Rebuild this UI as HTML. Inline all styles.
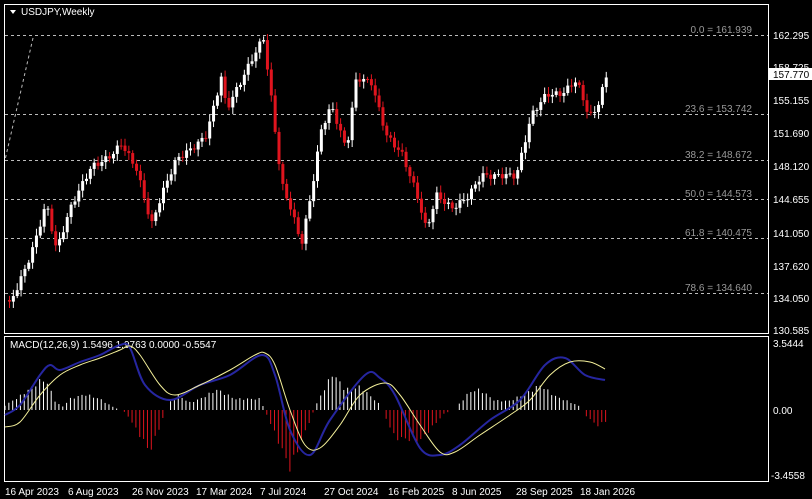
<!DOCTYPE html>
<html><head><meta charset="utf-8"><style>
html,body{margin:0;padding:0;background:#000;width:812px;height:499px;overflow:hidden}
svg{display:block}
text{font-family:"Liberation Sans",sans-serif;font-size:10px}
</style></head><body>
<svg id="s" width="812" height="499" xmlns="http://www.w3.org/2000/svg">
<rect width="812" height="499" fill="#000"/>
<rect x="4.5" y="4.5" width="764" height="329" fill="none" stroke="#fff"/>
<rect x="4.5" y="336.5" width="764" height="145" fill="none" stroke="#fff"/>
<g id="fib" stroke="#bbb" stroke-dasharray="3,3" stroke-width="1">
<line x1="5" y1="35.5" x2="768" y2="35.5"/><line x1="5" y1="114.5" x2="768" y2="114.5"/>
<line x1="5" y1="160.5" x2="768" y2="160.5"/><line x1="5" y1="199.5" x2="768" y2="199.5"/>
<line x1="5" y1="238.5" x2="768" y2="238.5"/><line x1="5" y1="293.5" x2="768" y2="293.5"/>
<line x1="33" y1="38" x2="5" y2="160"/>
</g>
<g fill="#999" text-anchor="end">
<text x="752" y="33">0.0 = 161.939</text><text x="752" y="112">23.6 = 153.742</text>
<text x="752" y="158">38.2 = 148.672</text><text x="752" y="197">50.0 = 144.573</text>
<text x="752" y="236">61.8 = 140.475</text><text x="752" y="291">78.6 = 134.640</text>
</g>
<path d="M10 10 L16 10 L13 14 Z" fill="#fff"/>
<text x="21" y="15" fill="#fff">USDJPY,Weekly</text>
<text x="10" y="348" fill="#fff" font-size="9.5">MACD(12,26,9) 1.5496 1.9763 0.0000 -0.5547</text>
<g id="c"></g><g id="h"></g><g id="l"></g>
<g fill="#fff">
<text x="773" y="39">162.295</text><text x="773" y="71">158.725</text>
<text x="773" y="104">155.155</text><text x="773" y="137">151.690</text>
<text x="773" y="170">148.120</text><text x="773" y="203">144.655</text>
<text x="773" y="237">141.050</text><text x="773" y="270">137.620</text>
<text x="773" y="302">134.050</text><text x="773" y="334">130.585</text>
<text x="773" y="347">3.5444</text><text x="773" y="414">0.00</text><text x="771" y="479">-3.4558</text>
</g>
<rect x="769" y="68" width="43" height="12" fill="#fff"/>
<text x="773" y="78" fill="#000">157.770</text>
<g fill="#fff">
<text x="5" y="495">16 Apr 2023</text><text x="68" y="495">6 Aug 2023</text>
<text x="132" y="495">26 Nov 2023</text><text x="196" y="495">17 Mar 2024</text>
<text x="260" y="495">7 Jul 2024</text><text x="324" y="495">27 Oct 2024</text>
<text x="388" y="495">16 Feb 2025</text><text x="452" y="495">8 Jun 2025</text>
<text x="516" y="495">28 Sep 2025</text><text x="580" y="495">18 Jan 2026</text>
</g>
</svg>
<script>
var NS="http://www.w3.org/2000/svg";
function el(p,t,a){var e=document.createElementNS(NS,t);for(var k in a)e.setAttribute(k,a[k]);p.appendChild(e);return e;}
function interp(pts,x){for(var i=0;i<pts.length-1;i++){if(x>=pts[i][0]&&x<=pts[i+1][0]){var t=(x-pts[i][0])/(pts[i+1][0]-pts[i][0]);return pts[i][1]+t*(pts[i+1][1]-pts[i][1]);}}return pts[x<pts[0][0]?0:pts.length-1][1];}
function smooth(p){var d="M"+p[0][0]+","+p[0][1];for(var i=0;i<p.length-1;i++){var p0=p[i-1]||p[i],p1=p[i],p2=p[i+1],p3=p[i+2]||p2;
d+=" C"+(p1[0]+(p2[0]-p0[0])/6)+","+(p1[1]+(p2[1]-p0[1])/6)+" "+(p2[0]-(p3[0]-p1[0])/6)+","+(p2[1]-(p3[1]-p1[1])/6)+" "+p2[0]+","+p2[1];}return d;}
var cp=[[8,300],[30,250],[45,205],[55,255],[70,210],[90,165],[110,150],[120,140],[135,170],[150,230],[160,200],[175,160],[190,145],[205,130],[220,75],[225,110],[240,85],[255,55],[262,40],[270,100],[280,180],[290,205],[300,240],[310,190],[320,130],[330,110],[345,155],[355,80],[370,80],[385,130],[400,150],[415,195],[425,235],[435,200],[450,210],[465,195],[480,170],[500,175],[515,180],[530,120],[545,95],[560,90],[575,75],[588,115],[595,110],[605,80]];
var g=document.getElementById('c');var prev=300;
for(var x=8;x<=606;x+=3.85){var c=interp(cp,x)+Math.sin(x*1.7)*5+Math.sin(x*0.53)*3;var o=prev;var hi=Math.min(o,c)-2-Math.abs(Math.sin(x*2.3))*5;var lo=Math.max(o,c)+2+Math.abs(Math.cos(x*1.9))*5;
var up=c<o;var col=up?"#fff":"#e0141e";
el(g,'line',{x1:x+1.5,x2:x+1.5,y1:hi,y2:lo,stroke:col,'stroke-width':1});
el(g,'rect',{x:x,y:Math.min(o,c),width:3,height:Math.max(1,Math.abs(c-o)),fill:col});prev=c;}
var hp=[[5,5],[20,15],[42,33],[47,30],[55,10],[62,3],[70,12],[85,17],[100,12],[110,5],[120,0],[126,-3],[150,-45],[165,-3],[172,12],[178,16],[190,8],[200,12],[217,22],[235,12],[260,12],[266,-3],[290,-63],[313,-3],[318,10],[333,40],[345,22],[360,25],[378,8],[383,-2],[395,-30],[420,-33],[445,-3],[455,0],[458,5],[470,20],[480,22],[495,10],[510,10],[530,20],[540,27],[555,15],[578,5],[583,0],[585,-5],[597,-17],[606,-12]];
var hg=document.getElementById('h');
for(var x=5;x<=606;x+=3.85){var v=interp(hp,x)*(0.92+0.08*Math.sin(x));if(Math.abs(v)<1)continue;
el(hg,'line',{x1:x,x2:x,y1:410,y2:410-v,stroke:v>0?"#fff":"#e0141e",'stroke-width':1});}
var yl=[[5,427],[20,422],[40,395],[60,375],[80,365],[100,358],[120,350],[130,346],[140,355],[160,385],[175,395],[200,385],[230,370],[255,355],[265,353],[275,365],[290,410],[305,445],[320,448],[340,425],[360,395],[385,383],[400,395],[420,425],[440,452],[455,452],[480,435],[510,415],[530,400],[550,375],[570,362],[590,362],[605,369]];
var bl=[[5,415],[20,405],[40,375],[50,365],[60,370],[80,362],[100,355],[120,345],[130,348],[145,385],[170,400],[200,385],[230,375],[262,355],[275,375],[290,430],[310,455],[330,420],[365,375],[380,378],[395,395],[420,448],[440,455],[460,445],[490,420],[520,400],[545,365],[565,358],[585,375],[605,380]];
var lg=document.getElementById('l');
el(lg,'path',{d:smooth(bl),fill:'none',stroke:'#2626a0','stroke-width':2});
el(lg,'path',{d:smooth(yl),fill:'none',stroke:'#f4f09a','stroke-width':1});
</script>
</body></html>
